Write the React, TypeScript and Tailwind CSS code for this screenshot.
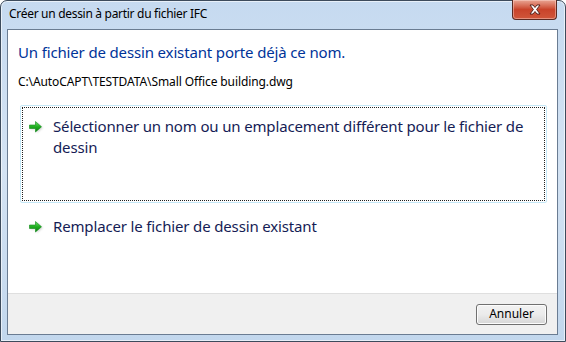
import React from "react";

const FONT = "font-['Segoe_UI','Noto_Sans','Liberation_Sans',sans-serif]";

const GreenArrow = () => (
  <svg width="16" height="14" viewBox="0 0 16 14" className="shrink-0">
    <defs>
      <linearGradient id="ga" x1="0" y1="0" x2="0" y2="1">
        <stop offset="0" stopColor="#6ee06a" />
        <stop offset="0.5" stopColor="#1fae1f" />
        <stop offset="1" stopColor="#0b7d12" />
      </linearGradient>
      <filter id="gs" x="-30%" y="-30%" width="160%" height="160%">
        <feGaussianBlur stdDeviation="0.8" />
      </filter>
    </defs>
    <path d="M2 5.5 H8 V2 L14 7 L8 12 V8.5 H2 Z" fill="#9aa39a" opacity="0.55" filter="url(#gs)" transform="translate(0.6 0.8)" />
    <path d="M1.5 5 H7.5 V1.5 L13.5 6.8 L7.5 12 V8.5 H1.5 Z" fill="url(#ga)" stroke="#0e8a16" strokeWidth="0.6" strokeLinejoin="round" />
  </svg>
);

const CloseGlyph = () => (
  <svg width="14" height="11" viewBox="0 0 14 11">
    <path
      d="M2 1 H5 L7 3.5 L9 1 H12 L8.6 5.5 L12 10 H9 L7 7.5 L5 10 H2 L5.4 5.5 Z"
      fill="#ffffff"
      stroke="#4a1a14"
      strokeWidth="0.9"
      strokeLinejoin="round"
    />
  </svg>
);

const CommandLink = ({ focused, lines }: { focused?: boolean; lines: string[] }) => (
  <div
    className={
      focused
        ? "ml-[12px] mr-[10px] h-[98px] rounded-[2px] border border-[#c5e8f7] p-px"
        : "ml-[12px] mr-[10px] h-[40px] border border-transparent p-px"
    }
  >
    <div
      className={
        focused
          ? "flex h-full items-start gap-[9px] border border-dotted border-[#202020] pl-[5px] pt-[8px]"
          : "flex h-full items-start gap-[9px] border border-transparent pl-[5px] pt-[8px]"
      }
    >
      <div className="pt-[4px]">
        <GreenArrow />
      </div>
      <div className="whitespace-nowrap text-[15px] leading-[21px] tracking-[-0.15px] text-[#151c55]">
        {lines.map((l) => (
          <div key={l}>{l}</div>
        ))}
      </div>
    </div>
  </div>
);

export default function App() {
  return (
    <div className={`${FONT} h-[342px] w-[566px] bg-white`}>
      <div className="flex h-full w-full flex-col rounded-t-[7px] border border-[#3d4b5c] bg-gradient-to-b from-[#c6daf0] via-[#d4e3f3] to-[#c2d7ed] pb-[6px] pl-[6px] pr-[7px] shadow-[inset_0_0_0_1px_rgba(255,255,255,0.6)]">
        <div className="flex h-[28px] shrink-0 items-start justify-between">
          <div className="pl-[2px] pt-[5px] text-[12px] leading-[16px] tracking-[-0.3px] text-black">
            Créer un dessin à partir du fichier IFC
          </div>
          <div className="-mt-px mr-[1px] flex h-[20px] w-[45px] items-center justify-center rounded-b-[4px] border border-t-0 border-[#5a2a22] bg-gradient-to-b from-[#e8a493] via-[#c9432a] to-[#d0563a] shadow-[inset_0_0_0_1px_rgba(255,220,210,0.45)]">
            <CloseGlyph />
          </div>
        </div>
        <div className="flex flex-1 flex-col border border-[#6a7c92] bg-white">
          <div className="flex-1">
            <div className="pl-[10px] pt-[12px] text-[15px] leading-[21px] tracking-[-0.15px] text-[#003399]">
              Un fichier de dessin existant porte déjà ce nom.
            </div>
            <div className="pl-[10px] pt-[11px] text-[12px] leading-[16px] tracking-[-0.1px] text-black">
              C:\AutoCAPT\TESTDATA\Small Office building.dwg
            </div>
            <div className="pt-[15px]">
              <CommandLink
                focused
                lines={[
                  "Sélectionner un nom ou un emplacement différent pour le fichier de",
                  "dessin",
                ]}
              />
            </div>
            <div className="pt-[2px]">
              <CommandLink lines={["Remplacer le fichier de dessin existant"]} />
            </div>
          </div>
          <div className="flex h-[41px] shrink-0 items-center justify-end border-t border-[#dfdfdf] bg-[#f0f0f0] pr-[10px]">
            <button className="flex h-[21px] w-[71px] items-center justify-center rounded-[3px] border border-[#707070] bg-gradient-to-b from-[#f2f2f2] via-[#ebebeb] to-[#d6d6d6] text-[12px] leading-none text-black shadow-[inset_0_0_0_1px_#fcfcfc]">
              Annuler
            </button>
          </div>
        </div>
      </div>
    </div>
  );
}
